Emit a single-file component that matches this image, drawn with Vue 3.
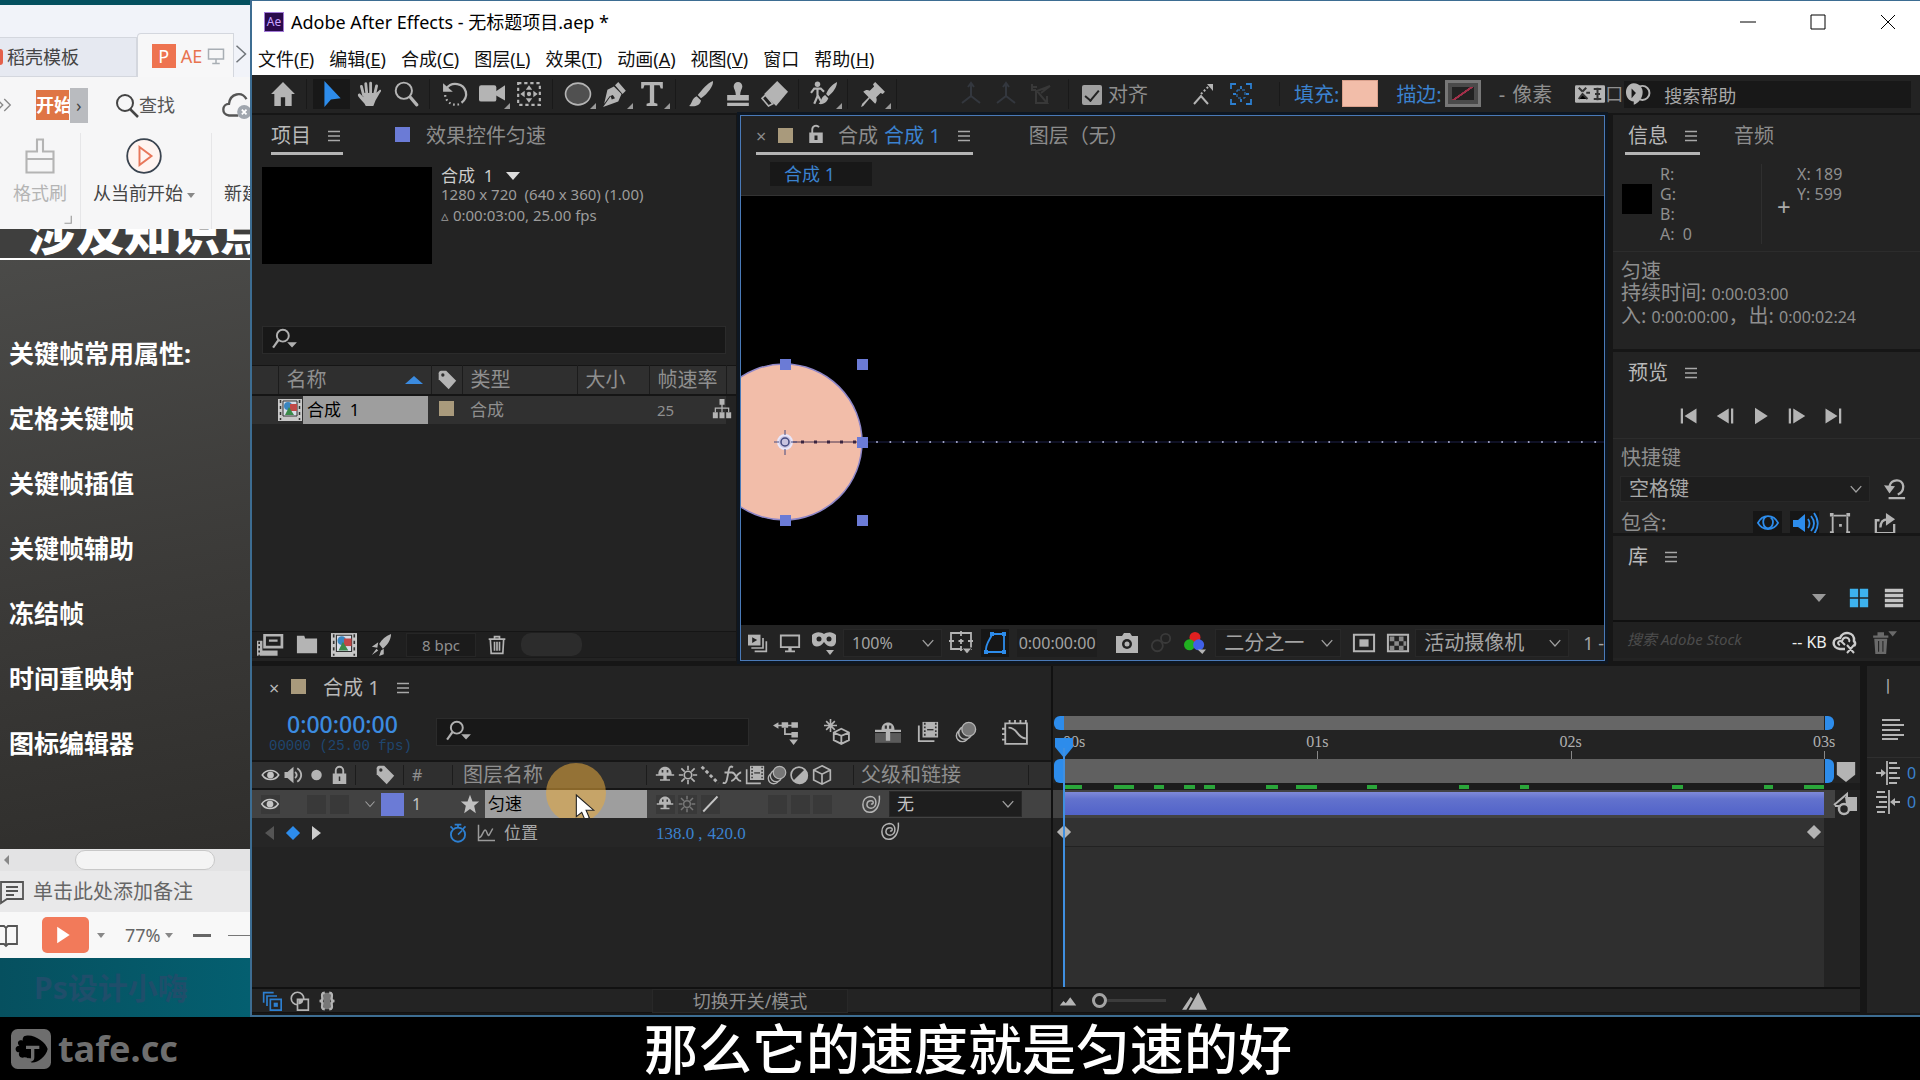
<script setup>
import { h } from 'vue'

const A = '#b4b4b4'
const icons = {
  home: `<path fill="${A}" d="M12 1 1 12h3v11h6v-8h4v8h6V12h3z"/>`,
  arrow: '<path fill="#2d8ceb" d="M5 0v24l6-7 9-1z"/>',
  hand: `<path fill="none" stroke="${A}" stroke-width="2.6" stroke-linecap="round" d="M7 13 5 5M10 12 9 2.500M13.500 12V2M17 13l2-8.500"/><path fill="${A}" d="M6 11h12l2-1 2-2c2 0 1 2 0 3l-4 7-2 5H9c-1-3-5-6-7-9-1-2 1-3 2-2l3 3z"/>`,
  zoom: `<circle cx="10" cy="9" r="7.500" fill="none" stroke="${A}" stroke-width="1.8"/><path stroke="${A}" stroke-width="3" stroke-linecap="round" d="m16 15 6 7"/>`,
  rotate: `<path fill="none" stroke="${A}" stroke-width="2.200" d="M4 7c5-7 16-5 18 3 1 4-1 8-4 10"/><path fill="${A}" d="M1 2v8h9z"/><path fill="none" stroke="${A}" stroke-width="2" stroke-dasharray="1.500 2.500" d="M3 13c0 6 7 11 14 8"/>`,
  camera: `<rect x="0" y="4" width="16" height="15" rx="2" fill="${A}"/><path fill="${A}" d="m15 10 9-6v14l-9-5z"/>`,
  pan: `<rect x="2" y="2" width="20" height="20" fill="none" stroke="${A}" stroke-width="2" stroke-dasharray="3 2.600"/><path fill="${A}" d="m12 4 3 4H9zM12 20l3-4H9zM4 12l4-3v6zM20 12l-4-3v6z"/><circle cx="12" cy="12" r="2" fill="${A}"/>`,
  ellipse: `<ellipse cx="12" cy="12" rx="11.500" ry="10" fill="#505050" stroke="${A}" stroke-width="1.500"/>`,
  pen: `<path fill="${A}" d="M15 1 22 9l-3 3-7-8zM11 5l7 7-3 7L1 24l7-10 1 3 3-1-2-3-3 1-5 7 3-13z"/>`,
  type: `<path fill="${A}" d="M2 1h20v6h-2l-1-3h-5v16l3 1v2H7v-2l3-1V4H5L4 7H2z"/>`,
  brush: `<path fill="${A}" d="M23 0c1 4-5 12-11 16l-3-3C13 8 18 2 23 0zM8 14l4 4c-1 5-6 6-11 5 3-2 2-7 7-9z"/>`,
  stamp: `<path fill="${A}" d="M8 5a4 4 0 1 1 8 0c0 2-2 4-2 8h8v5H2v-5h8c0-4-2-6-2-8zM2 20h20v3H2z"/>`,
  eraser: `<path fill="${A}" d="m14 0 10 10-11 13L2 12z"/><path fill="#232323" stroke="${A}" stroke-width="1.500" d="m3 13 7 8-4 2-6-7z"/>`,
  roto: `<circle cx="6" cy="3" r="2.500" fill="${A}"/><path fill="none" stroke="${A}" stroke-width="2" d="M6 6v8l-3 7M6 13l4 7M0 11l3-4h6l3 3"/><path fill="${A}" d="M24 1c0 5-4 10-8 13l-2-2c2-5 6-9 10-11zM13 13l3 3c-2 5-6 6-9 5 3-2 2-6 6-8z"/>`,
  pin: `<path fill="${A}" d="m14 1 9 9-2 2-2-1-4 4c1 3 0 5-1 6l-5-5-6 7-2 1 1-3 6-6-5-5c2-2 4-2 6-1l4-4-1-2z"/>`,
  axis: '<path fill="none" stroke="#33373e" stroke-width="2" d="M12 2v12L3 21M12 14l9 7M9 5l3-4 3 4"/>',
  axis2: '<path fill="none" stroke="#383838" stroke-width="2" d="M3 2v6h4M3 5h5M7 8v13h11L8 9l13-5-9 7M18 14v7"/>',
  snap: `<path fill="none" stroke="${A}" stroke-width="2" d="m3 22 7-8 7 8"/><path fill="none" stroke="${A}" stroke-width="2" stroke-dasharray="2 2" d="m10 12 8-8"/><path fill="${A}" d="M16 2h6v7z"/>`,
  snap2: '<path fill="none" stroke="#2d7fd0" stroke-width="1.800" d="M2 7V2h5M17 2h5v5M22 17v5h-5M7 22H2v-5M12 4v3M12 17v3M4 12h3M17 12h3"/><rect x="8" y="8" width="8" height="8" fill="none" stroke="#2d7fd0" stroke-dasharray="3 2"/>',
  burger: '<path stroke="#a8a8a8" stroke-width="2" d="M4 6h16M4 12h16M4 18h16"/>',
  glass: '<circle cx="10" cy="8" r="5.500" fill="none" stroke="#b0b0b0" stroke-width="1.800"/><path stroke="#b0b0b0" stroke-width="2" d="m6 12-5 7"/><path fill="#b0b0b0" d="M14 14h9l-4.500 5z"/>',
  tag: `<path fill="${A}" d="M2 4c0-1 1-3 3-3h6l12 12-9 10L2 11z"/><circle cx="7" cy="6" r="2" fill="#2f2f2f"/>`,
  film: '<path fill="#c8c8c8" d="M0 1h24v22H0z"/><path fill="#d8dde8" stroke="#333" d="M5 3h14v15H5z"/><path stroke="#333" stroke-width="1.500" stroke-dasharray="3 3" d="M2.500 2v20M21.500 2v20"/><circle cx="10" cy="8" r="4" fill="#3a86c0"/><rect x="12" y="6" width="7" height="7" fill="#c04848"/><path fill="#3b8a4a" d="m11 9 5 8H7z"/>',
  flow: `<path fill="${A}" d="M9 0h6v7H9zM1 16h6v7H1zM9 16h6v7H9zM17 16h6v7h-6z"/><path fill="none" stroke="${A}" stroke-width="1.500" d="M12 6v10M4 16v-5h16v5"/>`,
  footage: `<path fill="none" stroke="${A}" stroke-width="2.500" d="M7 3h16v11H7z"/><path fill="${A}" d="M11 7h8v2h-8zM0 8h5v9h14v5H0z"/><path stroke="#232323" stroke-width="1.500" stroke-dasharray="2 2" d="M2 9v13"/>`,
  folder: `<path fill="${A}" d="M1 2h8l1 3h13v16H1z"/>`,
  rocket: `<path fill="${A}" d="M23 0c0 7-5 13-9 16l-4-5c3-5 7-9 13-11zM9 9l-7 5 6 1zM15 16v6l-5 2 2-6zM7 16l2 2-7 5z"/>`,
  trash: `<path fill="none" stroke="${A}" stroke-width="2" d="M2 5h20M9 5V2h6v3M4 5l1 17h14l1-17M9 8v11M12 8v11M15 8v11"/>`,
  lock: `<path fill="${A}" d="M3 10h18v14H3z"/><path fill="none" stroke="${A}" stroke-width="2.500" d="M7 11V6a5 5 0 0 1 10 0v5"/><path fill="#2f2f2f" d="M11 14h2v6h-2z"/>`,
  unlock: `<path fill="${A}" d="M3 10h18v14H3z"/><path fill="none" stroke="${A}" stroke-width="2.500" d="M7 11V6a5 5 0 0 1 9-3"/><path fill="#232323" d="M10 14h4v6h-4z"/>`,
  stack: `<path fill="${A}" d="M0 2h15v13H0z"/><path fill="#232323" d="m5 5 6 3.500L5 12z"/><path fill="none" stroke="${A}" stroke-width="2" d="M18 6v12H4M22 10v12H8"/>`,
  monitor: `<path fill="none" stroke="${A}" stroke-width="2.200" d="M1 3h22v14H1z"/><path fill="${A}" d="M10 17h4v4h4v2H6v-2h4z"/>`,
  mask: `<path fill="${A}" d="M0 4c4-4 9-3 12-1 3-2 8-3 12 1v7c-1 6-8 6-12 0-4 6-11 6-12 0z"/><circle cx="7" cy="8" r="2.500" fill="#232323"/><circle cx="17" cy="8" r="2.500" fill="#232323"/><path fill="${A}" d="M14 19h8l-4 5z"/>`,
  guide: `<path fill="none" stroke="${A}" stroke-width="1.800" d="M2 2h20v16H2zM12 0v5M12 15v5M0 10h5M19 10h5M12 8v5M9.500 10h5"/><path fill="${A}" stroke="#232323" d="M13 17h10l-5 6z"/>`,
  shape: '<path fill="none" stroke="#2d8ceb" stroke-width="1.800" d="M3 21c-1-9 5-13 6-18h12v18z"/><path fill="#2d8ceb" d="M1 19h4v4H1zM7 1h4v4H7zM19 1h4v4h-4zM19 19h4v4h-4z"/>',
  photo: `<path fill="${A}" d="M1 5h6l2-3h6l2 3h6v17H1z"/><circle cx="12" cy="13" r="5" fill="#232323"/><circle cx="12" cy="13" r="2.500" fill="${A}"/>`,
  ghost: '<circle cx="8" cy="15" r="6" fill="none" stroke="#3a3a3a" stroke-width="2"/><circle cx="17" cy="7" r="5" fill="none" stroke="#3a3a3a" stroke-width="2"/>',
  rgb: `<circle cx="12" cy="6" r="6" fill="#e02020"/><circle cx="6" cy="14" r="6" fill="#20b020"/><circle cx="16" cy="14" r="6" fill="#4060e8"/><path fill="${A}" d="M15 19h9l-4 5z"/>`,
  roi: `<path fill="none" stroke="${A}" stroke-width="2.200" d="M1 3h22v18H1z"/><path fill="${A}" d="M7 8h10v8H7z"/>`,
  checker: `<path fill="none" stroke="${A}" stroke-width="2.200" d="M1 3h22v18H1z"/><path fill="#8a8a8a" d="M3 5h5v5H3zM13 5h5v5h-5zM8 10h5v5H8zM18 10h3v5h-3zM3 15h5v5H3zM13 15h5v5h-5z"/>`,
  chev: '<path fill="none" stroke="#a0a0a0" stroke-width="2.200" d="m3 7 9 10 9-10"/>',
  first: `<path fill="${A}" d="M1 2h3v20H1zM22 2v20L6 12z"/>`,
  prev: `<path fill="${A}" d="M20 2h3v20h-3zM17 2v20L1 12z"/>`,
  play: `<path fill="${A}" d="M4 1v22l17-11z"/>`,
  next: `<path fill="${A}" d="M1 2h3v20H1zM7 2v20l16-10z"/>`,
  last: `<path fill="${A}" d="M20 2h3v20h-3zM2 2v20l16-10z"/>`,
  reset: `<path fill="none" stroke="${A}" stroke-width="2.500" d="M6 9c2-8 14-9 15 0 0 5-3 8-6 9M5 22h18"/><path fill="${A}" d="m0 8 12 1-6 8z"/>`,
  eyeBlue: '<path fill="none" stroke="#2d8ceb" stroke-width="2" d="M1 13C6 3 18 3 23 13 18 22 6 22 1 13z"/><path fill="none" stroke="#2d8ceb" stroke-width="2" d="M10 6c-5 3-4 12 2 13 6-1 7-9 3-12"/>',
  sound: '<path fill="#2d8ceb" d="M0 9h5l7-6v18l-7-5H0z"/><path fill="none" stroke="#2d8ceb" stroke-width="1.800" d="M15 8c2 3 2 6 0 9M18 5c4 5 4 10 0 15M21 2c5 7 5 14 0 21"/>',
  frame: `<path fill="none" stroke="${A}" stroke-width="2" d="M5 4h14M4 5v18M20 5v18"/><path fill="${A}" d="M1 1h4v4H1zM19 1h4v4h-4zM11 13h3v3h-3zM1 21h4v3H1zM19 21h4v3h-4z"/>`,
  share: `<path fill="none" stroke="${A}" stroke-width="2.500" d="M6 9H2v14h20V13M7 17c0-6 3-9 8-9"/><path fill="${A}" d="m13 1 10 7-10 7z"/>`,
  grid: '<path fill="#3db2ee" d="M1 1h10v10H1zM13 1h10v10H13zM1 13h10v10H1zM13 13h10v10H13z"/>',
  list: '<path fill="#c4c4c4" d="M1 1h22v4H1zM1 7h22v4H1zM1 13h22v4H1zM1 19h22v4H1z"/>',
  cloud: '<path fill="none" stroke="#ccc" stroke-width="2.500" d="M13 19H8c-9-1-8-12 0-11 3-8 15-6 14 3 2 2 1 4 0 5"/><path fill="none" stroke="#ccc" stroke-width="2" d="M8 15c-4-1-1-6 2-3l3 3M10 11c2-6 9-3 7 1M15 15l7 8M22 15l-7 8"/>',
  bin: '<path fill="#6a6a6a" d="M2 6h14v2H2zM6 3h6v3H6zM3 9h12l-1 14H4z"/><path stroke="#232323" d="M7 11v10M11 11v10"/><path fill="#6a6a6a" d="M16 2h8l-4 5z"/>',
  tree: `<path fill="${A}" d="M0 6l5-3v6zM8 3h6v5H8zM17 3h6v5h-6zM17 12h6v5h-6zM15 19h8l-4 5z"/><path fill="none" stroke="${A}" stroke-width="1.600" d="M4 6h15M11 8v6h7"/>`,
  draft: `<path stroke="${A}" stroke-width="1.500" d="M6 0v12M0 6h12M2 2l8 8M10 2l-8 8"/><path fill="none" stroke="${A}" stroke-width="1.700" d="m16 9 7 3.500v7L16 23l-7-3.500v-7zM9 12.500l7 3 7-3M16 16v7"/>`,
  shy: `<path fill="${A}" d="M4 11c0-12 16-12 16 0h3v2h-9v4h4v2H6v-2h4v-4H1v-2z"/><path stroke="#333" stroke-width="2" d="M9 6v3M15 6v3"/>`,
  shyBig: `<path fill="#5a5a5a" d="M0 13h24v9H0z"/><path fill="${A}" d="M6 10c0-9 12-9 12 0h6v2H14v8h-4v-8H0v-2z"/><path stroke="#333" stroke-width="2" d="M10 6v3M14 6v3"/>`,
  blend: `<path fill="${A}" d="M6 1h17v17H6z"/><path stroke="#333" stroke-width="1.800" stroke-dasharray="2 2" d="M8.500 2v16M20.500 2v16"/><path stroke="#333" stroke-width="1.500" d="M11 9.500h7"/><path fill="none" stroke="${A}" stroke-width="2" d="M2 5v17h17"/>`,
  blur: `<circle cx="8" cy="16" r="6.500" fill="none" stroke="${A}" stroke-width="1.600"/><circle cx="11" cy="13" r="7" fill="#333" stroke="${A}" stroke-width="1.600"/><circle cx="15" cy="9" r="7.500" fill="#777" stroke="${A}" stroke-width="1.500"/>`,
  graph: `<path fill="none" stroke="${A}" stroke-width="1.700" d="M3 4h20v19H3zM6 8c9 0 7 9 16 10M7 4V1M12 4V1M17 4V1M22 4V1M3 9H0M3 14H0M3 19H0"/>`,
  eye: '<path fill="none" stroke="#c4c4c4" stroke-width="2" d="M1 12C6 4 18 4 23 12 18 20 6 20 1 12z"/><circle cx="12" cy="12" r="4.500" fill="#c4c4c4"/>',
  speaker: `<path fill="${A}" d="M0 8h4l8-7v22l-8-7H0z"/><path fill="none" stroke="${A}" stroke-width="2.500" d="M14 8c3 2 3 6 0 8M17 3c7 5 7 13 0 18"/>`,
  dot: `<circle cx="12" cy="12" r="7" fill="${A}"/>`,
  sun: `<circle cx="12" cy="12" r="4.500" fill="none" stroke="${A}" stroke-width="2"/><path stroke="${A}" stroke-width="2" d="M12 1v5M12 18v5M1 12h5M18 12h5M4 4l4 4M16 16l4 4M20 4l-4 4M8 16l-4 4"/>`,
  sunDim: `<g opacity=".5"><circle cx="12" cy="12" r="4.500" fill="none" stroke="${A}" stroke-width="2"/><path stroke="${A}" stroke-width="2" d="M12 1v5M12 18v5M1 12h5M18 12h5M4 4l4 4M16 16l4 4M20 4l-4 4M8 16l-4 4"/></g>`,
  dash: `<path stroke="${A}" stroke-width="3.500" stroke-dasharray="4 3" d="m2 2 20 20"/>`,
  slash: '<path stroke="#c4c4c4" stroke-width="2.500" d="M3 22 22 2"/>',
  fx: `<path fill="none" stroke="${A}" stroke-width="2.200" d="M13 3c-4-4-5 3-6 9s-2 12-6 9M3 9h9M12 9c6 0 4 11 11 10M23 9c-5 0-7 10-12 10"/>`,
  half: `<circle cx="12" cy="12" r="9.500" fill="none" stroke="${A}" stroke-width="2"/><path fill="${A}" d="M19 5A10 10 0 1 1 5 19z"/>`,
  cube: `<path fill="none" stroke="${A}" stroke-width="2" d="m12 1 10 5v12l-10 5-10-5V6zM2 6l10 5 10-5M12 11v12"/>`,
  spiral: `<path fill="none" stroke="${A}" stroke-width="1.800" d="M22 2c1 12-4 20-12 20-10 0-11-18 1-19 9 0 9 14 1 14-7 0-6-9 0-9 4 0 3 5 0 4"/>`,
  star: '<path fill="#c0c0c0" d="m12 1 3 8h8l-6 5 2 9-7-5-7 5 2-9-6-5h8z"/>',
  watch: '<circle cx="12" cy="14" r="8.500" fill="none" stroke="#2d7fd0" stroke-width="2.200"/><path stroke="#2d7fd0" stroke-width="2" d="M8 2h8M12 2v4M12 14l5-5M3 4l3 3M21 4l-3 3"/>',
  curve: '<path fill="none" stroke="#9a9a9a" stroke-width="2" d="M2 1v21h22M3 18c4 0 5-10 8-10 2 0 3 9 5 7l5-9"/>',
  layers: '<path fill="none" stroke="#2d7fd0" stroke-width="2" d="M2 14V2h12M6 18V6h12M10 10h13v13H10z"/><path fill="#2d7fd0" d="M14 14h5v5h-5z"/>',
  modes: `<circle cx="9" cy="9" r="7.500" fill="none" stroke="${A}" stroke-width="2"/><path fill="#232323" stroke="${A}" stroke-width="2" d="M9 10h13v13H9z"/><path fill="${A}" d="M10 16c5 0 6-3 6-6h-6z"/>`,
  braces: '<path fill="#777" d="M8 1h8v22H8z"/><path fill="none" stroke="#b4b4b4" stroke-width="3.500" d="M9 1C4 1 6 6 6 9c0 2-2 3-4 3 2 0 4 1 4 3 0 3-2 8 3 8M15 1c5 0 3 5 3 8 0 2 2 3 4 3-2 0-4 1-4 3 0 3 2 8-3 8"/>',
  mtnS: `<path fill="${A}" d="m1 18 5-6 3 3 6-8 8 11z"/>`,
  mtnL: `<path fill="${A}" d="M1 20 9 8l2 2-6 10zM7 20 16 4l8 16z"/>`,
  marker: `<path fill="${A}" d="M2 1h20v14l-10 8-10-8z"/>`,
  link: `<path fill="${A}" d="M12 5h12v14H14z"/><path fill="none" stroke="${A}" stroke-width="2" d="M1 13 14 2v10M2 14h8"/><circle cx="11" cy="17" r="5" fill="#232323" stroke="${A}" stroke-width="2.500"/>`,
  para: `<path stroke="${A}" stroke-width="1.800" d="M1 3h18M1 8h22M1 13h18M1 18h22M1 22h16"/>`,
  indentL: `<path stroke="${A}" stroke-width="1.800" d="M11 0v24M13 2h8M13 7h11M13 12h8M13 17h11M13 22h8M0 12h7"/><path fill="${A}" d="m5 8 5 4-5 4z"/>`,
  indentR: `<path stroke="${A}" stroke-width="1.800" d="M13 0v24M1 2h8M0 7h11M3 12h8M0 17h11M1 22h8M17 12h7"/><path fill="${A}" d="m19 8-5 4 5 4z"/>`,
  keyset: `<rect x="0" y="5" width="24" height="14" rx="1" fill="${A}"/><path stroke="#333" stroke-width="1.600" d="m3 7 3 3M9 7 6 10M3 16l3-4 4 4M9 11h3M15 8h6M16 12h4M15 16h6M18 7v10"/>`,
  helper: `<circle cx="17" cy="11" r="6.500" fill="none" stroke="${A}" stroke-width="1.800"/><path fill="${A}" d="M9 2c12 1 10 16 0 20v-3C0 18-1 3 9 2z"/><path fill="#181818" d="m7 7 4 4-4 5z"/>`,
  monitorS: '<path fill="none" stroke="#a8aeb4" stroke-width="2" d="M2 3h20v13H2zM12 16v6M7 22h10"/>',
  chevR: '<path fill="none" stroke="#70757a" stroke-width="2" d="m6 1 12 11L6 23"/>',
  dbl: '<path fill="none" stroke="#888" stroke-width="1.800" d="m1 4 8 8-8 8M11 4l8 8-8 8"/>',
  find: '<circle cx="10" cy="10" r="8" fill="none" stroke="#444" stroke-width="2"/><path stroke="#444" stroke-width="2.500" d="m15 16 8 8"/>',
  cloudW: '<path fill="none" stroke="#555" stroke-width="2" d="M14 21H6c-7-1-6-10 0-10C7 2 17 0 21 7"/><circle cx="19" cy="18" r="6" fill="#a0a6ae"/><path stroke="#fff" stroke-width="1.500" d="m17 16 4 4M21 16l-4 4"/>',
  painter: '<path fill="none" stroke="#b4b4b4" stroke-width="1.400" d="M10 1h4v8h7v5H3V9h7zM3 14v9h18v-9"/>',
  playRing: '<circle cx="12" cy="12" r="11.200" fill="#fff4f0" stroke="#3a4450" stroke-width="1.200"/><path fill="none" stroke="#e8775a" stroke-width="1.300" d="m9 6 8 6-8 6z"/>',
  corner: '<path fill="none" stroke="#999" stroke-width="3" d="M22 2v20H4"/>',
  note: '<path fill="none" stroke="#555" stroke-width="1.800" d="M1 2h22v17H7l-6 4zM6 7h12M6 11h12M6 15h8"/>',
  book: '<path fill="none" stroke="#555" stroke-width="1.800" d="M-6 3H10l2 2 2-2h9v18h-9l-2 2-2-2H-6M12 4v18"/>',
  playW: '<path fill="#fff" d="M5 2v20l15-10z"/>',
  logo: '<rect width="24" height="24" rx="4" fill="#6e6e6e"/><path fill="#000" d="M9 4c5-1 12 4 13 8-1 5-7 9-10 8-1-2-2-3-4-3-2 1-4-1-3-3-3 0-3-4 0-4-2-2 0-4 2-3 0-1 0-3 2-3z"/><path fill="none" stroke="#6e6e6e" stroke-width="2" d="M9 11h8M13 11v6c0 2-2 2-3 1"/>',
  cursor: '<path fill="#fff" stroke="#222" d="M4 0v20l5-4 3 7 4-2-3-7h7z"/>'
}
const Icon = (p) => h('svg', { viewBox: '0 0 24 24', class: 'icon', 'aria-hidden': 'true', innerHTML: icons[p.name] })
Icon.props = ['name']

const topics = ['关键帧常用属性:', '定格关键帧', '关键帧插值', '关键帧辅助', '冻结帧', '时间重映射', '图标编辑器']
const menus = [['文件', 'F'], ['编辑', 'E'], ['合成', 'C'], ['图层', 'L'], ['效果', 'T'], ['动画', 'A'], ['视图', 'V'], ['窗口', ''], ['帮助', 'H']]
const toolGroups = [['home'], ['arrow', 'hand', 'zoom'], ['rotate', 'camera', 'pan'], ['ellipse', 'pen', 'type'], ['brush', 'stamp', 'eraser'], ['roto'], ['pin']]
const withFlyout = ['camera', 'ellipse', 'pen', 'type', 'roto', 'pin']
const cached = [[0, 18], [50, 20], [90, 10], [120, 11], [140, 11], [201, 12], [231, 21], [302, 10], [394, 10], [455, 9], [606, 11], [698, 9], [738, 20]]
const span = 758
const pct = (n) => (n / span) * 100 + '%'
const marks = ['00s', '01s', '02s', '03s']
const path = Array.from({ length: 55 }, (_, i) => 136 + i * 13.3)
const handles = [[44, 168], [121, 168], [121, 246], [44, 324], [121, 324]]
</script>

<template>
  <div class="page">
    <div class="desktop">
      <aside class="wps">
        <nav class="wtabs">
          <a href="#" class="wtab"><i class="ember"></i>稻壳模板</a>
          <a href="#" class="wtab on"><b class="plogo">P</b>AE<Icon name="monitorS" class="i18" /></a>
          <Icon name="chevR" class="i18" />
        </nav>
        <div class="wline">
          <Icon name="dbl" class="i18" />
          <button class="start">开始</button><button class="more" aria-label="更多">›</button>
          <button class="find"><Icon name="find" class="i24" />查找</button>
          <Icon name="cloudW" class="i28" />
        </div>
        <div class="ribbon">
          <button class="rb dim"><Icon name="painter" class="i36" />格式刷<Icon name="corner" class="rcorner" /></button>
          <button class="rb wide"><Icon name="playRing" class="i36" /><span>从当前开始<i class="caret"></i></span></button>
          <button class="rb cut"><i class="i36"></i>新建</button>
        </div>
        <section class="slide">
          <h1>涉及知识点</h1>
          <p v-for="t in topics" :key="t">{{ t }}</p>
        </section>
        <div class="hscroll"><i class="left"></i><i class="thumb"></i></div>
        <div class="notes"><Icon name="note" class="i24" />单击此处添加备注</div>
        <div class="status">
          <Icon name="book" class="i24" />
          <button class="show" aria-label="播放"><Icon name="playW" class="i20" /></button><i class="caret"></i>
          <span class="zoomv">77%</span><i class="caret"></i><i class="minus"></i><i class="rail"></i>
        </div>
        <div class="wall">Ps设计小嗨</div>
      </aside>

      <main class="ae">
        <header class="title">
          <b class="aelogo">Ae</b><span>Adobe After Effects - 无标题项目.aep *</span>
          <div class="wbtns">
            <button aria-label="最小化"><svg width="16" height="16"><path d="M0 8h16" stroke="#000" /></svg></button>
            <button aria-label="最大化"><svg width="16" height="16"><path d="M1 1h14v14H1z" fill="none" stroke="#000" /></svg></button>
            <button aria-label="关闭"><svg width="16" height="16"><path d="m1 1 14 14M15 1 1 15" stroke="#000" /></svg></button>
          </div>
        </header>
        <nav class="menu">
          <a v-for="m in menus" :key="m[0]" href="#">{{ m[0] }}<template v-if="m[1]">(<u>{{ m[1] }}</u>)</template></a>
        </nav>

        <div class="tools">
          <div v-for="(g, i) in toolGroups" :key="i" class="tgroup">
            <button v-for="t in g" :key="t" :aria-label="t" :class="{ sel: t === 'arrow', fly: withFlyout.includes(t) }"><Icon :name="t" class="i26" /></button>
          </div>
          <div class="tgroup axes"><Icon name="axis" class="i24" /><Icon name="axis" class="i24" /><Icon name="axis2" class="i24" /></div>
          <label class="align"><input type="checkbox" checked />对齐</label>
          <div class="snaps"><Icon name="snap" class="i24" /><Icon name="snap2" class="i24" /></div>
          <div class="paint">
            <a href="#">填充:</a><button class="fill" aria-label="填充颜色"></button>
            <a href="#" class="stroke-l">描边:</a><button class="stroke" aria-label="描边颜色"></button>
            <span>-</span><span>像素</span>
          </div>
          <div class="add"><Icon name="keyset" class="i30" />口:</div>
          <label class="help"><Icon name="helper" class="i26" /><input type="text" placeholder="搜索帮助" aria-label="搜索帮助" /></label>
        </div>

        <div class="upper">
          <section class="panel project">
            <div class="tabs">
              <span class="tab on bright">项目<Icon name="burger" class="i18" /></span>
              <span class="tab fxtab"><i class="sq blue"></i>效果控件匀速</span>
            </div>
            <div class="meta">
              <div class="thumbnail"></div>
              <div class="info">
                <strong>合成&nbsp; 1<i class="tri"></i></strong>
                <span>1280 x 720&nbsp; (640 x 360) (1.00)</span>
                <span>▵ 0:00:03:00, 25.00 fps</span>
              </div>
            </div>
            <label class="search"><Icon name="glass" class="i26" /><input type="text" aria-label="搜索项目" /></label>
            <table class="items">
              <colgroup><col class="c1" /><col class="c2" /><col class="c3" /><col class="c4" /><col class="c5" /><col class="c6" /><col /></colgroup>
              <thead><tr><th></th><th><div class="sortby">名称<i></i></div></th><th><Icon name="tag" class="i20" /></th><th>类型</th><th>大小</th><th>帧速率</th><th></th></tr></thead>
              <tbody><tr><td colspan="2"><div class="item"><Icon name="film" class="i24" /><span>合成&nbsp; 1</span></div></td><td><i class="sq tan"></i></td><td>合成</td><td></td><td class="num">25</td><td></td></tr></tbody>
            </table>
            <Icon name="flow" class="i20 flowico" />
            <div class="pfoot">
              <Icon name="footage" class="i26" /><Icon name="folder" class="i22" /><Icon name="film" class="i26" /><Icon name="rocket" class="i22" />
              <button class="bpc">8 bpc</button>
              <Icon name="trash" class="i20" /><i class="blob"></i>
            </div>
          </section>

          <section class="panel comp">
            <div class="tabs">
              <span class="tab on"><i class="x">×</i><i class="sq tan"></i><Icon name="unlock" class="i18 lk" />合成<em>合成 1</em><Icon name="burger" class="i18" /></span>
              <span class="tab none">图层（无）</span>
            </div>
            <div class="crumb"><button>合成 1</button></div>
            <svg class="stage">
              <circle cx="43" cy="246" r="78" fill="#f2bda9" stroke="#8f87c8" stroke-width="1.500" />
              <path d="M121 246H864" stroke="#1c2148" stroke-width="1" />
              <path d="M50 246h70" stroke="#4a3550" stroke-width="1" />
              <path d="M60 246h60" stroke="#3a2540" stroke-width="3" stroke-dasharray="3 10" />
              <circle v-for="x in path" :key="x" :cx="x" cy="246" r="1" fill="#a9add0" />
              <circle cx="44" cy="246" r="7" fill="#c9c4e0" stroke="#e8e6fa" stroke-width="2" />
              <circle cx="44" cy="246" r="4" fill="none" stroke="#444a80" stroke-width="1.500" />
              <path d="M44 234v5M44 253v6M33 246h5M50 246h6" stroke="#444a80" />
              <rect v-for="p in handles" :key="p.join()" :x="p[0] - 5" :y="p[1] - 5" width="11" height="11" fill="#6b7bd6" />
            </svg>
            <div class="cfoot">
              <Icon name="stack" class="i20" /><Icon name="monitor" class="i20" /><Icon name="mask" class="i24" />
              <label class="pick z"><select aria-label="缩放"><option>100%</option></select><Icon name="chev" class="i14" /></label>
              <Icon name="guide" class="i24" /><button class="shapebtn" aria-label="蒙版"><Icon name="shape" class="i24" /></button>
              <button class="tc">0:00:00:00</button>
              <Icon name="photo" class="i24" /><Icon name="ghost" class="i22" /><Icon name="rgb" class="i22" />
              <label class="pick r"><select aria-label="分辨率"><option>二分之一</option></select><Icon name="chev" class="i14" /></label>
              <Icon name="roi" class="i22" /><Icon name="checker" class="i22" />
              <label class="pick v"><select aria-label="视图"><option>活动摄像机</option></select><Icon name="chev" class="i14" /></label>
              <span class="one">1&nbsp;-</span>
            </div>
          </section>

          <div class="side">
            <section class="panel infop">
              <div class="tabs">
                <span class="tab on bright">信息<Icon name="burger" class="i18" /></span><span class="tab audio">音频</span>
              </div>
              <div class="colors">
                <i class="chip"></i>
                <div class="rgba"><span>R:</span><span>G:</span><span>B:</span><span>A:&nbsp; 0</span></div>
                <i class="plus">+</i>
                <div class="xy"><span>X: 189</span><span>Y: 599</span></div>
              </div>
              <div class="desc"><span>匀速</span><span>持续时间: <small>0:00:03:00</small></span><span>入: <small>0:00:00:00</small>，出: <small>0:00:02:24</small></span></div>
            </section>
            <section class="panel preview">
              <div class="tabs"><span class="tab bright">预览<Icon name="burger" class="i18" /></span></div>
              <div class="transport"><button v-for="n in ['first', 'prev', 'play', 'next', 'last']" :key="n" :aria-label="n"><Icon :name="n" class="i18" /></button></div>
              <label class="lbl" for="key">快捷键</label>
              <div class="keyrow"><div class="pick k"><select id="key"><option>空格键</option></select><Icon name="chev" class="i14" /></div><Icon name="reset" class="i22" /></div>
              <div class="include"><span>包含:</span><b><Icon name="eyeBlue" class="i22" /></b><b><Icon name="sound" class="i24" /></b><Icon name="frame" class="i22" /><Icon name="share" class="i22" /></div>
            </section>
            <section class="panel lib">
              <div class="tabs"><span class="tab bright">库<Icon name="burger" class="i18" /></span></div>
              <div class="libview"><i class="tri"></i><Icon name="grid" class="i20" /><Icon name="list" class="i20" /></div>
              <div class="libfoot"><input type="text" placeholder="搜索 Adobe Stock" aria-label="搜索 Adobe Stock" /><span>-- KB</span><Icon name="cloud" class="i24" /><Icon name="bin" class="i26" /></div>
            </section>
          </div>
        </div>

        <div class="lower">
          <section class="panel timeline">
            <div class="layers">
              <div class="tabs"><span class="tab bright"><i class="x">×</i><i class="sq tan"></i><span class="tn">合成 1</span><Icon name="burger" class="i18" /></span></div>
              <div class="thead">
                <div class="clock"><b>0:00:00:00</b><span>00000 (25.00 fps)</span></div>
                <label class="search"><Icon name="glass" class="i26" /><input type="text" aria-label="搜索图层" /></label>
                <div class="ticons"><Icon name="tree" class="i26" /><Icon name="draft" class="i26 apart" /><Icon name="shyBig" class="i26 apart" /><Icon name="blend" class="i22" /><Icon name="blur" class="i22" /><Icon name="graph" class="i26 apart" /></div>
              </div>
              <div class="row head">
                <div class="av"><Icon name="eye" class="i18" /><Icon name="speaker" class="i18" /><Icon name="dot" class="i18" /><Icon name="lock" class="i18" /></div>
                <div class="tagc"><Icon name="tag" class="i20" /></div>
                <div class="no">#</div>
                <div class="nm">图层名称</div>
                <div class="sw"><Icon v-for="n in ['shy', 'sun', 'dash', 'fx', 'blend', 'blur', 'half', 'cube']" :key="n" :name="n" class="i20" /></div>
                <div class="par">父级和链接</div>
                <div></div>
              </div>
              <div class="row layer">
                <div class="av"><span class="box"><Icon name="eye" class="i18" /></span><i></i><i class="box"></i><i class="box"></i></div>
                <div class="lab"><Icon name="chev" class="i12" /><i></i></div>
                <div class="no">1</div>
                <div class="nm"><Icon name="star" class="i20" /><span>匀速</span></div>
                <div class="sw"><span class="box"><Icon name="shy" class="i18" /></span><span class="box"><Icon name="sunDim" class="i18" /></span><span class="box"><Icon name="slash" class="i18" /></span><i></i><i></i><i class="box"></i><i class="box"></i><i class="box"></i></div>
                <div class="par"><Icon name="spiral" class="i20" /><label class="pick p"><select aria-label="父级"><option>无</option></select><Icon name="chev" class="i14" /></label></div>
                <div></div>
                <span class="halo"></span><Icon name="cursor" class="pointer" />
              </div>
              <div class="row prop">
                <div class="kf"><i class="kl"></i><i class="kd"></i><i class="kr"></i></div>
                <div></div><div></div>
                <div class="pn"><Icon name="watch" class="i20" /><Icon name="curve" class="i18" />位置</div>
                <div class="val">138.0<i>,</i>420.0</div>
                <div class="par2"><Icon name="spiral" class="i20" /></div>
                <div></div>
              </div>
              <div class="empty"></div>
              <div class="tfoot"><Icon name="layers" class="i20" /><Icon name="modes" class="i20" /><Icon name="braces" class="i18" /><button>切换开关/模式</button></div>
            </div>

            <div class="track">
              <div class="pad"></div>
              <div class="lane navi"><div class="bar"></div></div>
              <div class="lane ruler">
                <div class="scale"><span v-for="(m, i) in marks" :key="m" :style="{ left: (i / 3) * 100 + '%' }">{{ m }}</span></div>
              </div>
              <div class="lane work"><div class="bar"></div><Icon name="marker" class="i22 railico" /></div>
              <div class="lane cache"><div class="scale"><i v-for="c in cached" :key="c[0]" :style="{ left: pct(c[0]), width: pct(c[1]) }"></i></div></div>
              <div class="lane clip"><div class="bar"></div><Icon name="link" class="i24 railico" /></div>
              <div class="lane keys"><div class="scale"><i class="key" :style="{ left: pct(0) }"></i><i class="key" :style="{ left: pct(748) }"></i></div></div>
              <div class="lane void"><div class="scale"></div></div>
              <div class="tfoot zoomer"><Icon name="mtnS" class="i18" /><input type="range" min="0" max="100" value="0" aria-label="时间缩放" /><Icon name="mtnL" class="i26" /></div>
              <div class="playhead"><svg width="18" height="20"><path d="M0 0h18v9l-9 11-9-11z" fill="#2d8ceb" /></svg></div>
            </div>
          </section>
          <section class="panel parap">
            <div class="glyph">丨</div>
            <div class="pr first"><Icon name="para" class="i24" /></div>
            <div class="pr"><Icon name="indentL" class="i24" /><span>0</span></div>
            <div class="pr"><Icon name="indentR" class="i24" /><span>0</span></div>
          </section>
        </div>
      </main>
    </div>

    <footer class="caption">
      <div class="brand"><Icon name="logo" class="i40" />tafe.cc</div>
      <p>那么它的速度就是匀速的好</p>
    </footer>
  </div>
</template>

<style>
body { margin: 0; background: #000; }
</style>

<style scoped>
.page { min-height: 100vh; display: flex; flex-direction: column; background: #000; overflow: hidden; font: 18px/24px "Noto Sans", "Noto Sans CJK SC", sans-serif; color: #8f8f8f; }
.page * { box-sizing: border-box; }
button, input, select { font: inherit; color: inherit; background: none; border: 0; padding: 0; margin: 0; outline: 0; }
select { appearance: none; width: 100%; height: 100%; }
a { color: inherit; text-decoration: none; }
i { font-style: normal; }
p, h1 { margin: 0; }
.icon { display: block; flex: none; overflow: visible; }
.i12 { width: 12px; height: 12px; } .i14 { width: 14px; height: 14px; } .i18 { width: 18px; height: 18px; } .i20 { width: 20px; height: 20px; }
.i22 { width: 22px; height: 22px; } .i24 { width: 24px; height: 24px; } .i26 { width: 26px; height: 26px; }
.i28 { width: 28px; height: 28px; } .i30 { width: 30px; height: 30px; } .i36 { width: 36px; height: 36px; } .i40 { width: 40px; height: 40px; }
.desktop { flex: 1; display: flex; }

/* presentation editor */
.wps { width: 250px; flex: none; overflow: hidden; display: flex; flex-direction: column; background: #f6f6f7; border-top: 5px solid #04505f; color: #444; }
.wtabs { height: 72px; flex: none; display: flex; align-items: flex-end; background: #f1f3f9; }
.wtab { width: 138px; height: 40px; display: flex; align-items: center; background: #e6e9f1; border: 1px solid #d4d7de; border-left: 0; }
.wtab.on { width: 98px; height: 44px; background: #f7f7f8; border: 1px solid #d4d7de; border-bottom: 0; border-radius: 4px 0 0 0; padding-left: 14px; gap: 5px; color: #e8734f; }
.wtabs > .icon { margin: 0 0 14px -2px; }
.ember { width: 3px; height: 16px; background: #e4604a; border-radius: 0 8px 8px 0; margin-right: 4px; }
.plogo { width: 24px; height: 24px; background: #ee7350; color: #fff; line-height: 24px; text-align: center; font-weight: 400; }
.wline { height: 56px; flex: none; display: flex; align-items: center; }
.wline > .icon:first-child { margin-left: -4px; }
.wline > .icon:last-child { margin-left: 47px; }
.start { width: 36px; height: 30px; margin-left: 22px; background: #df7545; color: #fff; font-weight: 700; white-space: nowrap; overflow: hidden; }
.more { width: 20px; height: 42px; background: #b9bbbf; margin-left: 1px; height: 35px; }
.find { display: flex; align-items: center; margin-left: 27px; color: #555; white-space: nowrap; }
.ribbon { height: 96px; flex: none; display: flex; }
.rb { position: relative; width: 81px; flex: none; display: flex; flex-direction: column; align-items: center; gap: 7px; padding-top: 5px; border-right: 1px solid #e6e6e8; white-space: nowrap; }
.rb.dim { color: #b4b4b4; } .rb.wide { width: 131px; padding-right: 4px; } .rb.cut { padding-left: 12px; align-items: flex-start; border: 0; }
.rcorner { position: absolute; right: 8px; bottom: 5px; width: 9px; height: 9px; }
.caret { display: inline-block; border: 4px solid transparent; border-top: 5px solid #888; border-bottom: 0; margin-left: 4px; vertical-align: middle; }
.slide { flex: 1; background: linear-gradient(170deg, #4c4c4a, #3a3937 60%, #2f2e2c); color: #fff; font-weight: 700; font-size: 25px; }
.slide h1 { height: 31px; margin-bottom: 61px; padding-left: 28px; display: flex; align-items: flex-end; overflow: hidden; background: #3f3f3e; border-bottom: 2px solid #fff; font-size: 48px; line-height: 52px; font-weight: 900; white-space: nowrap; }
.slide p { height: 65px; line-height: 65px; padding-left: 9px; white-space: nowrap; }
.hscroll { height: 22px; flex: none; background: #e3e3e4; display: flex; align-items: center; padding-left: 4px; }
.hscroll .left { border: 5px solid transparent; border-right-color: #888; border-left: 0; }
.hscroll .thumb { width: 140px; height: 20px; margin-left: 66px; background: #f4f4f4; border: 1px solid #c8c8c8; border-radius: 10px; }
.notes { height: 41px; flex: none; background: #e9e9ea; display: flex; align-items: center; gap: 9px; font-size: 20px; color: #666; white-space: nowrap; }
.status { height: 46px; flex: none; background: #f8f8f8; display: flex; align-items: center; color: #666; }
.status .icon:first-child { margin-left: -6px; }
.show { width: 47px; height: 36px; margin: 0 4px 0 24px; border-radius: 5px; background: #f27a5a; display: flex; align-items: center; justify-content: center; }
.zoomv { margin-left: 20px; }
.minus { width: 18px; height: 3px; background: #666; margin: 0 17px 0 20px; }
.rail { flex: 1; height: 1px; background: #777; }
.wall { height: 59px; flex: none; background: linear-gradient(90deg, #06505f, #045f70); color: #1f4e6a; font-size: 30px; font-weight: 700; line-height: 60px; padding-left: 34px; }

/* AE window chrome */
.ae { flex: 1; min-width: 0; display: flex; flex-direction: column; background: #161616; border: 1px solid #3d6d92; border-width: 1px 0 2px 2px; }
.title { height: 44px; flex: none; display: flex; align-items: center; gap: 7px; padding: 0 24px 0 12px; background: #fff; color: #000; font-size: 18px; }
.aelogo { width: 20px; height: 20px; background: #2a0a4c; border: 1px solid #a27ad8; color: #c9a3ff; font-size: 12px; line-height: 18px; text-align: center; font-weight: 400; }
.title > * { margin-top: -2px; }
.wbtns { margin-left: auto; display: flex; gap: 54px; }
.wbtns svg { display: block; }
.menu { height: 30px; flex: none; display: flex; gap: 15px; padding: 2px 6px; background: #fff; color: #111; white-space: nowrap; }
.tools { height: 38px; flex: none; display: flex; align-items: center; background: #232323; padding-left: 12px; font-size: 20px; white-space: nowrap; }
.tgroup { display: flex; align-items: center; border-right: 1px solid #191919; margin-right: 6px; padding-right: 5px; height: 30px; }
.tgroup button { position: relative; width: 37px; height: 30px; display: flex; align-items: center; justify-content: center; }
.tgroup .sel { background: #181818; }
.fly::after { content: ""; position: absolute; right: 0; bottom: 0; border: 3px solid transparent; border-right-color: #999; border-bottom-color: #999; }
.axes { margin-left: 56px; gap: 11px; padding-right: 15px; }
.align { display: flex; align-items: center; gap: 6px; margin-left: 7px; padding-top: 2px; }
.align input { appearance: none; width: 20px; height: 20px; border-radius: 2px; background: #a0a0a0; display: grid; place-items: center; }
.align input::after { content: ""; width: 6px; height: 12px; margin-top: -3px; border: solid #222; border-width: 0 2px 2px 0; transform: rotate(40deg); }
.snaps { display: flex; gap: 14px; margin-left: 43px; padding-right: 26px; border-right: 1px solid #191919; }
.paint { display: flex; align-items: center; margin-left: 14px; flex: none; padding-top: 2px; }
.paint a { color: #3b82cf; }
.fill, .stroke { width: 36px; height: 27px; margin: -4px 0 0 3px; }
.fill { background: #f2bda9; border: 1px solid #d9a08c; }
.stroke { border: 3px solid #777; background: linear-gradient(145deg, #222 46%, #a3304a 47%, #a3304a 52%, #222 53%); box-shadow: inset 0 0 0 4px #4a4a4a; }
.stroke-l { margin-left: 18px; }
.paint span { margin-left: 7px; } .paint button + span { margin-left: 18px; }
.add { display: flex; align-items: center; margin-left: 23px; width: 49px; overflow: hidden; font-size: 18px; }
.help { flex: 1; min-width: 0; height: 27px; display: flex; align-items: center; background: #181818; margin-right: 9px; gap: 14px; font-size: 18px; color: #a8a8a8; }
.help input { width: 100%; padding-top: 3px; } .help input::placeholder { color: #a8a8a8; opacity: 1; }

/* panels */
.upper { display: flex; margin-top: 2px; padding-bottom: 5px; flex: none; }
.panel { background: #232323; }
.tabs { height: 41px; display: flex; font-size: 20px; white-space: nowrap; flex: none; }
.tab { display: flex; align-items: center; height: 40px; padding-top: 4px; color: #8c8c8c; border-bottom: 3px solid transparent; }
.tab.on { border-bottom-color: #b4b4b4; }
.tab > .icon:last-child { margin-left: 14px; }
.bright { color: #b8b8b8; }
.tab em { font-style: normal; color: #3b82cf; margin-left: 6px; }
.sq { width: 15px; height: 15px; display: block; flex: none; margin-top: -2px; }
.sq.blue { background: #6b7bd6; } .sq.tan { background: #a99a7c; }
.x { width: 9px; font-size: 18px; margin-right: 13px; }
.project { width: 484px; flex: none; display: flex; flex-direction: column; position: relative; margin-right: 4px; }
.project .tabs { padding-left: 19px; gap: 52px; }
.fxtab .sq { margin-right: 16px; }
.meta { display: flex; gap: 9px; padding: 11px 10px 0; }
.thumbnail { width: 170px; height: 97px; background: #000; }
.info { display: flex; flex-direction: column; font-size: 15px; line-height: 21px; color: #9c9c9c; }
.info strong { font-size: 17px; font-weight: 400; color: #ccc; line-height: 17px; display: flex; align-items: center; }
.tri { display: inline-block; border: 7px solid transparent; border-top: 8px solid #ddd; border-bottom: 0; margin-left: 12px; }
.search { height: 28px; display: flex; align-items: center; background: #181818; border: 1px solid #2b2b2b; padding-left: 9px; }
.search input { flex: 1; min-width: 0; }
.project .search { margin: 62px 10px 11px; }
.items { width: 100%; table-layout: fixed; border-collapse: collapse; font-size: 20px; }
.c1 { width: 26px; } .c2 { width: 153px; } .c3 { width: 31px; } .c4 { width: 115px; } .c5 { width: 72px; } .c6 { width: 77px; }
.items th { height: 29px; padding: 0 0 0 8px; background: #2f2f2f; border-top: 1px solid #151515; border-bottom: 2px solid #151515; text-align: left; font-weight: 400; line-height: 24px; }
.items th:not(:last-child) { border-right: 1px solid #1c1c1c; }
.items th .icon { margin-left: -3px; }
.sortby { display: flex; align-items: center; justify-content: space-between; padding-right: 8px; }
.sortby i { border: 9px solid transparent; border-bottom: 8px solid #3b8be0; border-top: 0; }
.items td { height: 28px; padding: 0 0 0 8px; background: #303030; font-size: 17px; line-height: 24px; }
.items td:last-child { background: #232323; }
.items td:first-child { padding: 0; }
.items .num { font-size: 15px; }
.item { display: flex; align-items: center; gap: 1px; padding-left: 26px; color: #000; }
.item span { flex: 1; background: #9e9e9e; line-height: 28px; padding-left: 4px; margin-right: 3px; }
.flowico { position: absolute; right: 4px; top: 284px; }
.pfoot { margin: auto 0 3px; height: 27px; display: flex; align-items: center; gap: 14px; padding-left: 6px; border-top: 1px solid #151515; border-bottom: 1px solid #1a1a1a; background: #1f1f1f; }
.bpc { width: 70px; background: #1b1b1b; border: 1px solid #262626; font-size: 15px; line-height: 22px; margin-right: -2px; }
.blob { width: 61px; height: 23px; background: #2c2c2c; border-radius: 10px; }
.pfoot .icon { margin-left: -1px; }
.comp { flex: 1; min-width: 0; border: 1px solid #4a7ab8; box-shadow: 0 0 0 3px #0e1722; display: flex; flex-direction: column; }
.comp .tabs { padding-left: 15px; gap: 56px; height: 40px; }
.comp .tab { height: 39px; }
.lk { margin: -5px 13px 0 14px; }
.crumb { height: 40px; padding: 6px 0 0 29px; border-bottom: 1px solid #333; }
.crumb button { width: 102px; height: 24px; background: #181818; color: #3b82cf; font-size: 18px; text-align: left; padding-left: 14px; display: block; }
.stage { display: block; width: 100%; height: 429px; background: #000; }
.cfoot { height: 32px; display: flex; align-items: center; gap: 12px; padding: 3px 0 0 7px; font-size: 20px; color: #a4a4a4; white-space: nowrap; overflow: hidden; }
.pick { position: relative; display: block; height: 28px; background: #1e1e1e; border: 1px solid #282828; flex: none; }
.pick select { padding-left: 8px; }
.pick .icon { position: absolute; right: 6px; top: 50%; margin-top: -7px; pointer-events: none; }
.z { width: 99px; font-size: 16px; margin-left: -5px; margin-right: -5px; }
.shapebtn { background: #161616; padding: 2px; margin-left: -4px; }
.tc { width: 98px; height: 28px; background: #1e1e1e; font-size: 16px; margin: 0 0 0 -4px; }
.tc + .icon { margin-left: -2px; margin-right: -1px; }
.r { width: 126px; margin-left: -3px; } .v { width: 154px; margin-left: -6px; }
.cfoot .tc + .icon { margin-left: 6px; }
.one { font-size: 18px; margin-left: 2px; }

.side { width: 307px; flex: none; margin-left: 8px; display: flex; flex-direction: column; gap: 3px; overflow: hidden; }
.side .tabs { padding-left: 12px; }
.side .tab.bright { padding-left: 3px; }
.infop { height: 234px; }
.audio { margin-left: 34px; }
.colors { height: 96px; display: flex; padding: 8px 0 0 9px; font-size: 16px; line-height: 20px; border-bottom: 1px solid #2c2c2c; }
.chip { width: 30px; height: 30px; background: #000; margin-top: 20px; }
.rgba { width: 110px; height: 80px; padding-left: 8px; border-right: 1px solid #2f2f2f; }
.rgba span, .xy span, .desc span { display: block; }
.plus { font-size: 24px; color: #aaa; margin: 33px 0 0 15px; width: 20px; }
.desc { padding: 8px 0 0 8px; font-size: 20px; line-height: 22px; white-space: nowrap; }
.desc small { font-size: 16px; }
.preview { height: 181px; overflow: hidden; }
.preview .tabs { height: 44px; }
.transport { height: 43px; display: flex; align-items: flex-start; gap: 18px; padding: 11px 0 0 67px; border-bottom: 1px solid #2c2c2c; }
.lbl { display: block; font-size: 20px; line-height: 38px; padding-left: 8px; }
.keyrow { display: flex; align-items: center; gap: 14px; padding-left: 7px; font-size: 20px; color: #a8a8a8; margin-top: -1px; }
.k { width: 250px; height: 26px; }
.k select { padding-left: 8px; }
.include { display: flex; align-items: center; padding: 4px 0 0 8px; font-size: 20px; height: 38px; gap: 8px; }
.include span { width: 124px; }
.include b { background: #161616; width: 29px; height: 24px; display: flex; justify-content: center; }
.include > .icon { margin-left: 2px; }
.include > .icon:last-child { margin-left: 15px; }
.lib { height: 125px; }
.lib .tabs { height: 43px; }
.libview { height: 43px; display: flex; align-items: center; gap: 15px; padding: 0 16px 3px 0; justify-content: flex-end; border-bottom: 2px solid #101010; }
.libview .tri { border-top-color: #999; margin-right: 8px; }
.libfoot { display: flex; align-items: center; height: 36px; padding: 4px 0 0 14px; gap: 6px; font-size: 16px; color: #eee; background: #202020; }
.libfoot input { width: 159px; font-size: 15px; font-style: italic; padding-bottom: 6px; } .libfoot input::placeholder { color: #4c4c4c; opacity: 1; }
.libfoot .icon { margin-left: -1px; }
.libfoot .icon:last-child { margin-left: 9px; }

/* timeline */
.lower { flex: 1; display: flex; gap: 7px; margin-bottom: 2px; }
.timeline { flex: 1; min-width: 0; display: flex; }
.layers { width: 801px; flex: none; display: flex; flex-direction: column; border-right: 2px solid #111; }
.layers .tabs { height: 42px; padding-left: 17px; }
.layers .tab { height: 42px; } .tn { margin-left: 17px; }
.thead { height: 54px; display: flex; align-items: center; border-bottom: 2px solid #161616; padding-bottom: 5px; }
.clock { width: 184px; padding-left: 17px; display: flex; flex-direction: column; padding-top: 2px; }
.clock b { font-size: 23px; font-weight: 500; line-height: 26px; color: #3b8be0; padding-left: 18px; }
.clock span { font: 14px/18px "Liberation Mono", monospace; color: #1f466f; }
.thead .search { width: 313px; }
.ticons { display: flex; padding-left: 24px; gap: 16px; align-items: center; flex: 1; }
.apart { margin-left: 9px; }
.row { position: relative; display: grid; grid-template-columns: 104px 48px 49px 194px 207px 175px 1fr; height: 29px; align-items: center; font-size: 17px; }
.head { height: 28px; background: #2f2f2f; border-bottom: 2px solid #161616; font-size: 20px; }
.head > div { height: 20px; display: flex; align-items: center; }
.head > div:not(:last-child) { border-right: 1px solid #1c1c1c; }
.av { display: flex; padding-left: 7px; }
.av > * { width: 19px; margin: 0 2px; height: 18px; }
.tagc { padding-left: 19px; }
.row .no { padding-left: 8px; font-size: 16px; }
.head .nm { padding-left: 10px; }
.head .sw { display: grid; }
.sw { display: grid; grid-template-columns: repeat(8, 1fr); padding: 0 20px 0 7px; justify-items: center; }
.par { display: flex; align-items: center; gap: 8px; padding-left: 7px; }
.layer { background: #424242; height: 28px; color: #c4c4c4; }
.box { display: flex; width: 19px; height: 19px; background: #393939; }
.lab { display: flex; align-items: center; justify-content: flex-end; gap: 5px; }
.lab i { width: 23px; height: 23px; background: #6b7bd6; }
.layer .nm { display: flex; align-items: center; padding-left: 7px; gap: 5px; height: 28px; }
.layer .nm span { flex: 1; line-height: 28px; background: #9e9e9e; color: #000; padding-left: 3px; }
.p { width: 133px; height: 26px; }
.p select { padding-left: 7px; }
.halo { position: absolute; left: 294px; top: -27px; width: 60px; height: 60px; border-radius: 50%; background: rgba(232, 170, 60, .55); }
.pointer { position: absolute; left: 320px; top: 5px; width: 26px; height: 26px; }
.prop { background: #262626; height: 29px; }
.kf { display: flex; align-items: center; padding-left: 13px; gap: 14px; }
.kl { border: 7px solid transparent; border-right: 9px solid #555; border-left: 0; }
.kr { border: 7px solid transparent; border-left: 9px solid #ccc; border-right: 0; }
.kd { width: 10px; height: 10px; background: #2d8ceb; transform: rotate(45deg); }
.pn { display: flex; align-items: center; gap: 9px; margin-left: -5px; color: #a8a8a8; }
.val { font: 17px/24px "Liberation Serif", serif; color: #3b82cf; padding: 2px 0 0 9px; }
.val i { margin: 0 5px 0 4px; }
.par2 { padding: 0 0 3px 26px; }
.empty { flex: 1; min-height: 120px; }
.tfoot { height: 26px; flex: none; display: flex; align-items: center; gap: 8px; padding-left: 10px; border-top: 2px solid #111; border-bottom: 1px solid #111; font-size: 18px; }
.tfoot button { width: 196px; line-height: 22px; background: #1f1f1f; border: 1px solid #282828; margin-left: 308px; }
.track { position: relative; flex: 1; min-width: 0; display: flex; flex-direction: column; }
.pad { height: 50px; }
.lane { position: relative; padding: 0 36px 0 11px; flex: none; }
.scale { position: relative; height: 100%; }
.bar { height: 100%; }
.navi { height: 14px; } .navi .bar { background: #666; }
.navi .bar::before, .work .bar::before, .navi .bar::after, .work .bar::after { content: ""; position: absolute; top: 0; bottom: 0; width: 10px; background: #2d8ceb; }
.navi .bar::before, .work .bar::before { left: 1px; border-radius: 6px 0 0 6px; }
.navi .bar::after, .work .bar::after { right: 26px; border-radius: 0 6px 6px 0; width: 9px; }
.ruler { height: 29px; font: 16px/24px "Liberation Serif", serif; color: #b0b0b0; }
.ruler span { position: absolute; width: 40px; margin-left: -20px; text-align: center; }
.ruler span:first-child { margin-left: -10px; }
.ruler span:not(:first-child)::after { content: ""; position: absolute; left: 20px; top: 21px; width: 1px; height: 8px; background: #888; }
.work { height: 24px; } .work .bar { background: #606060; }
.railico { position: absolute; right: 3px; top: 2px; }
.cache { height: 7px; background: #1c1c1c; }
.cache i { position: absolute; top: 2px; height: 4px; background: #2aa63a; }
.clip { height: 28px; background: linear-gradient(90deg, #424242, #424242) no-repeat 0 0 / calc(100% - 25px) 100%; padding-top: 2px; padding-bottom: 3px; }
.clip .bar { background: linear-gradient(#7f8ad8, #6272cd 30%, #5263c9); }
.keys { height: 29px; } .keys .scale { background: #323232; border-bottom: 1px solid #222; }
.key { position: absolute; top: 9px; width: 10px; height: 10px; margin-left: -5px; background: #b4b4b4; transform: rotate(45deg); }
.void { flex: 1; min-height: 120px; } .void .scale { background: #2f2f2f; }
.zoomer { padding-left: 6px; gap: 15px; }
.zoomer input { appearance: none; width: 74px; height: 3px; background: #3c3c3c; }
.zoomer input::-webkit-slider-thumb { appearance: none; width: 15px; height: 15px; border: 3px solid #a4a4a4; border-radius: 50%; background: #232323; }
.playhead { position: absolute; left: 2px; top: 72px; bottom: 26px; width: 18px; }
.playhead svg { display: block; }
.playhead::after { content: ""; position: absolute; left: 8px; top: 10px; bottom: 0; width: 2px; background: #3f8fe0; }
.parap { width: 53px; overflow: hidden; font-size: 16px; padding-top: 8px; color: #3b82cf; }
.glyph { color: #b0b0b0; padding-left: 13px; line-height: 24px; }
.pr { display: flex; gap: 7px; padding-left: 9px; height: 29px; align-items: center; }
.first { height: 60px; padding-left: 14px; padding-top: 2px; border-bottom: 1px solid #2f2f2f; }

.caption { position: relative; height: 63px; flex: none; background: #000; color: #fff; }
.caption p { text-align: center; font-size: 54px; line-height: 64px; font-weight: 500; padding-left: 16px; white-space: nowrap; }
.brand { position: absolute; left: 11px; top: 12px; display: flex; align-items: center; gap: 7px; color: #6e6e6e; font: 700 36px/40px "Noto Sans", sans-serif; }
</style>
